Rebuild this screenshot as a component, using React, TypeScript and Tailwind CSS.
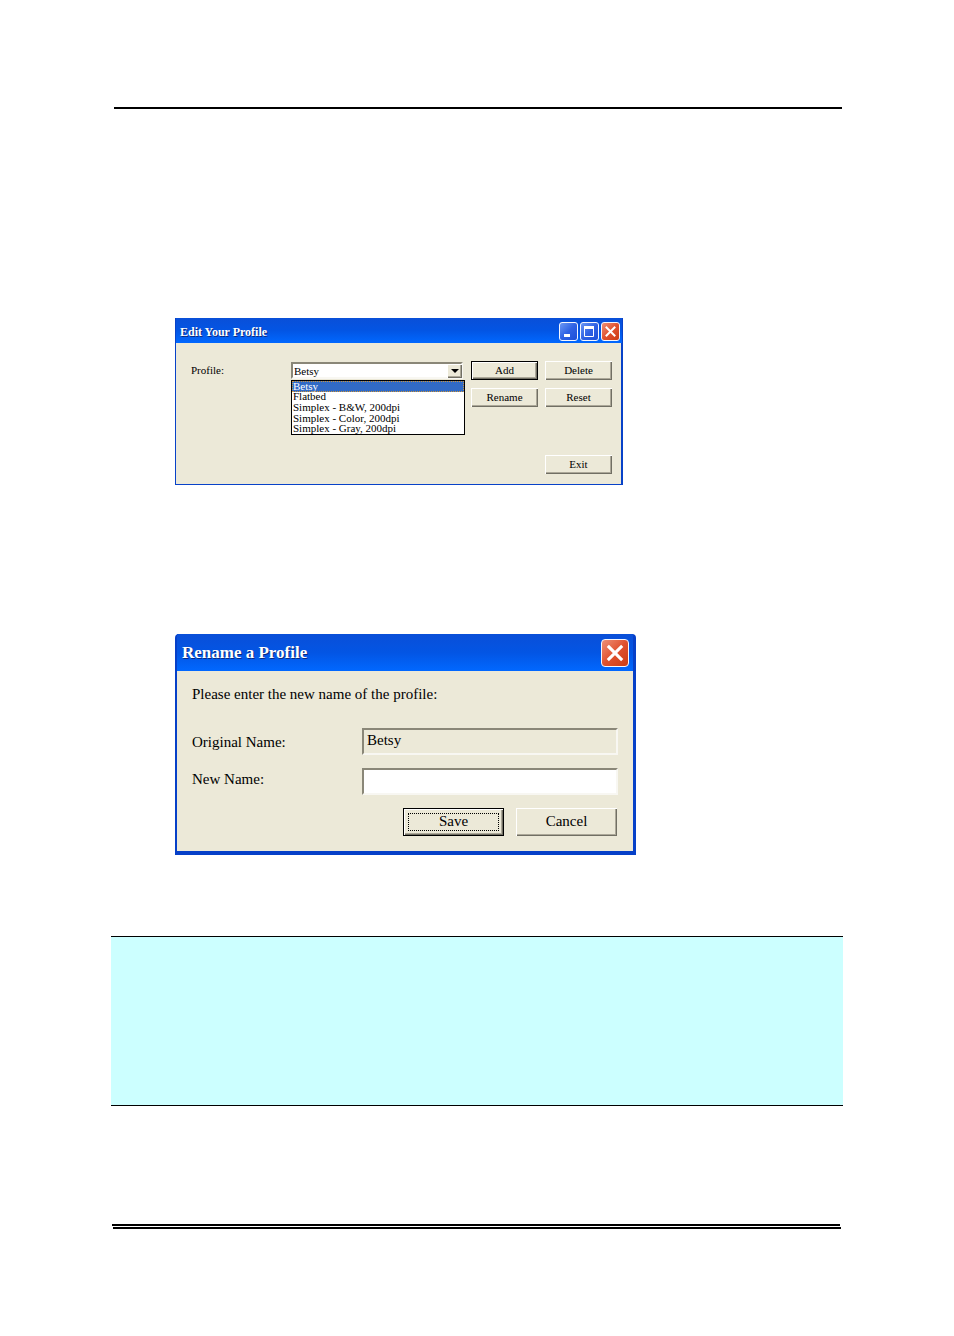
import type { ReactNode } from "react"
import { clsx } from "clsx"

const profiles = [
  "Betsy",
  "Flatbed",
  "Simplex - B&W, 200dpi",
  "Simplex - Color, 200dpi",
  "Simplex - Gray, 200dpi",
]

type ButtonProps = {
  children: ReactNode
  size?: "sm" | "lg"
  isDefault?: boolean
  focused?: boolean
}

function ClassicButton({ children, size = "sm", isDefault, focused }: ButtonProps) {
  return (
    <button
      type="button"
      className={clsx(
        "relative flex items-center justify-center bg-[#ece9d8] pb-[2px] text-black",
        size === "sm" ? "h-[19px] w-[67px] text-[11px] leading-3" : "h-7 w-[101px] text-[15px] leading-4",
        isDefault
          ? "border border-black shadow-[inset_1px_1px_0_#fff,inset_-1px_-1px_0_#716f64,inset_-2px_-2px_0_#aca899]"
          : "shadow-[inset_1px_1px_0_#fff,inset_-1px_-1px_0_#716f64,inset_-2px_-2px_0_#aca899]"
      )}
    >
      {children}
      {focused && <span className="absolute inset-1 border border-dotted border-black" />}
    </button>
  )
}

function CaptionButton({ kind, large }: { kind: "minimize" | "maximize" | "close"; large?: boolean }) {
  return (
    <button
      type="button"
      aria-label={kind}
      className={clsx(
        "flex items-center justify-center border border-[#f4f6ff]",
        large ? "size-7 rounded-[4px]" : "size-[19px] rounded-[3px]",
        kind === "close"
          ? "bg-linear-to-br from-[#ec8f76] via-[#e0512e] to-[#cc3c12]"
          : "bg-linear-to-br from-[#6c97f4] via-[#2f62e4] to-[#1c4fd8]"
      )}
    >
      <svg viewBox="0 0 17 17" className="size-full" fill="none" stroke="#fff">
        {kind === "minimize" && <path d="M4 12.5h6" strokeWidth="3" />}
        {kind === "maximize" && (
          <>
            <path d="M3.5 4v9.5h9V4" />
            <path d="M3 4.5h10" strokeWidth="3" />
          </>
        )}
        {kind === "close" && <path d="M4.5 4.5l8 8M12.5 4.5l-8 8" strokeWidth="2" strokeLinecap="square" />}
      </svg>
    </button>
  )
}

function EditProfileDialog() {
  return (
    <section className="w-full max-w-[448px] border-b border-l border-r-2 border-[#0842c8] bg-[#ece9d8] text-[11px] leading-3">
      <header className="-mr-px flex h-[25px] items-center justify-between bg-linear-to-b from-[#0a4fd8] via-[#0355e4] to-[#0168ff] pt-[2px] pr-[2px] pl-1">
        <h2 className="text-[12px] font-bold text-white [text-shadow:1px_1px_0_#0a2a80]">Edit Your Profile</h2>
        <div className="flex gap-[2px]">
          <CaptionButton kind="minimize" />
          <CaptionButton kind="maximize" />
          <CaptionButton kind="close" />
        </div>
      </header>
      <div className="pt-[18px] pr-[9px] pb-[10px] pl-[15px]">
        <div className="flex">
          <label htmlFor="profile" className="flex-1 pt-[3px]">Profile:</label>
          <div className="relative mt-px mr-2 h-[17px] w-[172px]">
            <select
              id="profile"
              defaultValue="Betsy"
              className="size-full appearance-none border-2 border-t-[#8a8778] border-r-[#f8f7f2] border-b-[#f8f7f2] border-l-[#8a8778] bg-white pl-px leading-3 outline-none"
            >
              {profiles.map((name) => (
                <option key={name}>{name}</option>
              ))}
            </select>
            <span className="pointer-events-none absolute top-[2px] right-[1px] flex h-[14px] w-[15px] items-center justify-center bg-[#ece9d8] shadow-[inset_1px_1px_0_#fff,inset_-1px_-1px_0_#716f64,inset_-2px_-2px_0_#aca899]">
              <svg viewBox="0 0 8 4" className="h-1 w-2">
                <path d="M0 0h8L4 4z" />
              </svg>
            </span>
            <ul
              role="listbox"
              aria-label="Profiles"
              className="absolute top-[18px] left-0 grid h-[55px] w-[174px] grid-rows-5 border border-black bg-white"
            >
              {profiles.map((name, index) => (
                <li
                  key={name}
                  role="option"
                  aria-selected={index === 0}
                  className={clsx(
                    "flex items-center px-px leading-none",
                    index === 0 && "bg-[#316ac5] text-white outline-1 -outline-offset-1 outline-dotted outline-[#ce953a]"
                  )}
                >
                  {name}
                </li>
              ))}
            </ul>
          </div>
          <div className="grid grid-cols-2 gap-x-[7px] gap-y-2">
            <ClassicButton isDefault>Add</ClassicButton>
            <ClassicButton>Delete</ClassicButton>
            <ClassicButton>Rename</ClassicButton>
            <ClassicButton>Reset</ClassicButton>
          </div>
        </div>
        <div className="mt-12 flex justify-end">
          <ClassicButton>Exit</ClassicButton>
        </div>
      </div>
    </section>
  )
}

function RenameDialog() {
  const field =
    "h-[27px] w-[256px] border-2 border-t-[#8a8778] border-l-[#8a8778] border-r-[#f8f7f2] border-b-[#f8f7f2] px-[3px] outline-none"

  return (
    <section className="w-full max-w-[461px] rounded-t-[4px] border-r-[3px] border-b-4 border-l-2 border-[#0640c8] bg-[#ece9d8] text-[15px] leading-4">
      <header className="flex h-[37px] items-center justify-between bg-linear-to-b from-[#0a4fd8] via-[#0355e4] to-[#0168ff] pr-1 pl-[5px]">
        <h2 className="text-[17px] font-bold text-white [text-shadow:1px_1px_0_#0a2a80]">Rename a Profile</h2>
        <CaptionButton kind="close" large />
      </header>
      <form className="px-[15px] pt-[15px] pb-[15px]">
        <p>Please enter the new name of the profile:</p>
        <div className="mt-[26px] flex items-center justify-between">
          <label htmlFor="original-name">Original Name:</label>
          <input id="original-name" readOnly value="Betsy" className={clsx(field, "bg-[#ece9d8] pb-[3px]")} />
        </div>
        <div className="mt-[13px] flex items-start justify-between">
          <label htmlFor="new-name" className="pt-[3px]">New Name:</label>
          <input id="new-name" className={clsx(field, "bg-white")} />
        </div>
        <div className="mt-[13px] flex justify-end gap-3 pr-px">
          <ClassicButton size="lg" isDefault focused>Save</ClassicButton>
          <ClassicButton size="lg">Cancel</ClassicButton>
        </div>
      </form>
    </section>
  )
}

export default function App() {
  return (
    <main className="min-h-screen bg-white px-[111px] pt-[107px] pb-[107px] font-['Liberation_Serif',serif] text-black">
      <hr className="mr-px ml-[3px] border-t-2 border-black" />
      <div className="mt-[209px] pl-16">
        <EditProfileDialog />
      </div>
      <div className="mt-[149px] pl-16">
        <RenameDialog />
      </div>
      <aside className="mt-[81px] h-[170px] border-y border-black bg-[#ccffff]" />
      <footer className="mt-[118px]">
        <hr className="mr-[3px] ml-px border-t-2 border-black" />
        <hr className="mt-px mr-[2px] ml-[2px] border-t-2 border-black" />
      </footer>
    </main>
  )
}
